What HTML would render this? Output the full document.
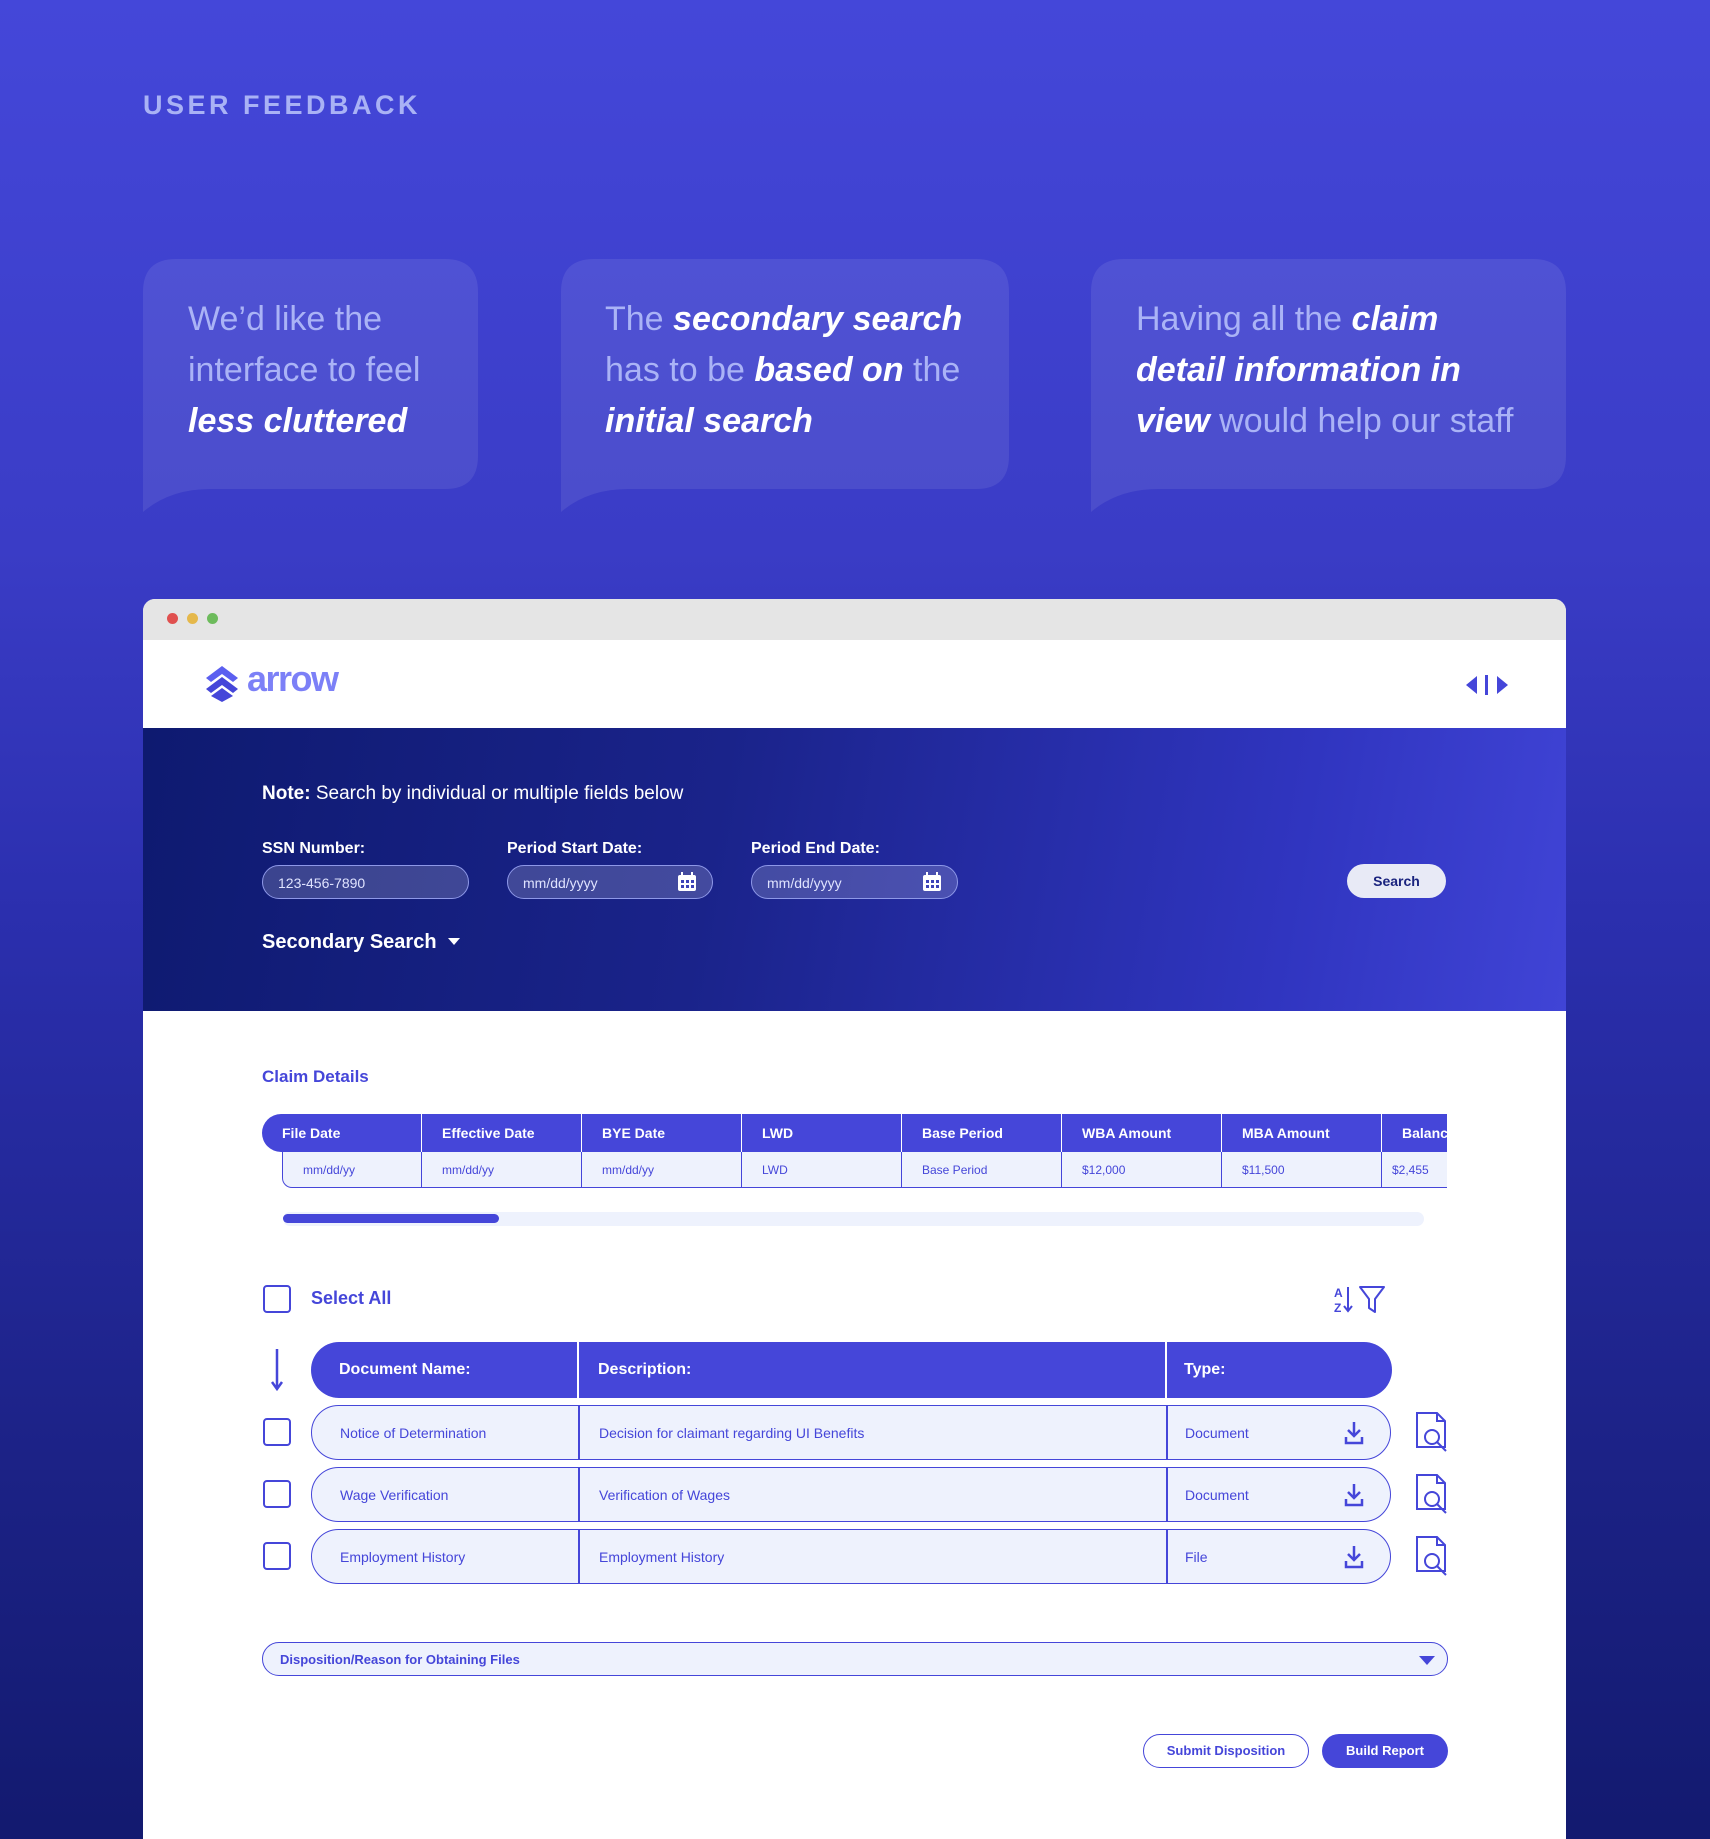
<!DOCTYPE html>
<html style="background:#131a70"><head><meta charset="utf-8"><style>
*{margin:0;padding:0;box-sizing:border-box}
body{width:1710px;height:1824px;overflow:hidden;font-family:"Liberation Sans",Arial,sans-serif;background:linear-gradient(180deg,#4447d9 0%,#3a3cc6 30%,#2b2fae 50%,#1c2286 80%,#131a70 100%);position:relative}
.abs{position:absolute}
.h1{left:143px;top:90px;font-size:27px;letter-spacing:3.5px;font-weight:bold;color:#a9b2f5}
.bt{position:absolute;font-size:34px;line-height:51px;color:#aab3f6}
.bt b{color:#fff;font-style:italic}
.win{left:143px;top:599px;width:1423px;height:1240px;background:#fff;border-radius:12px 12px 0 0;overflow:hidden}
.tb{height:41px;background:#e5e5e5}
.dot{position:absolute;top:14px;width:11px;height:11px;border-radius:50%}
.hdr{height:88px;background:#fff;position:relative}
.srch{height:283px;background:linear-gradient(100deg,#0e1a70 0%,#1a238a 40%,#3035c0 80%,#4044d6 100%);position:relative;color:#fff}
.lbl{position:absolute;font-size:16px;font-weight:bold;top:240px;color:#fff}
.inp{position:absolute;top:265px;height:34px;border:1.5px solid #8e98e8;border-radius:17px;background:rgba(255,255,255,0.18);font-size:14px;color:#dfe3ff;padding:9px 15px}
.cal{position:absolute;right:15px;top:6px}
.hc{position:absolute;height:38px;background:#4546d9;color:#fff;font-size:14px;font-weight:bold;padding:11px 20px;border-right:1.5px solid #fff}
.rc{position:absolute;height:36px;background:#eef2fd;color:#4546d9;font-size:12px;padding:11px 20px;border-right:1.5px solid #4546d9;border-bottom:1.5px solid #4546d9}
.cb{position:absolute;width:28px;height:28px;border:2px solid #4546d9;border-radius:4px}
.row{position:absolute;left:168px;width:1080px;height:55px;border:1.5px solid #4546d9;border-radius:28px;background:#eef2fd;color:#4546d9;font-size:14px}
.row span{position:absolute;top:19px}
.vl{position:absolute;top:0;bottom:0;width:1.5px;background:#4546d9}
</style></head><body>
<div class="abs h1">USER FEEDBACK</div>
<svg class="abs" style="left:0;top:0" width="1710" height="600">
<g fill="rgba(255,255,255,0.085)">
<path d="M143 292 Q143 259 176 259 L445 259 Q478 259 478 292 L478 456 Q478 489 445 489 L210 489 Q170 489 143 512 Z"/>
<path d="M561 292 Q561 259 594 259 L976 259 Q1009 259 1009 292 L1009 456 Q1009 489 976 489 L628 489 Q588 489 561 512 Z"/>
<path d="M1091 292 Q1091 259 1124 259 L1533 259 Q1566 259 1566 292 L1566 456 Q1566 489 1533 489 L1158 489 Q1118 489 1091 512 Z"/>
</g></svg>
<div class="bt" style="left:188px;top:294px">We’d like the<br>interface to feel<br><b>less cluttered</b></div>
<div class="bt" style="left:605px;top:294px">The <b>secondary search</b><br>has to be <b>based on</b> the<br><b>initial search</b></div>
<div class="bt" style="left:1136px;top:294px">Having all the <b>claim<br>detail information in<br>view</b> would help our staff</div>

<div class="abs win">
 <div class="tb"><div class="dot" style="left:24px;background:#e0504f"></div><div class="dot" style="left:44px;background:#e5b84b"></div><div class="dot" style="left:64px;background:#6dbb5c"></div></div>
 <div class="hdr">
  <svg class="abs" style="left:60px;top:24px" width="38" height="38" viewBox="0 0 38 38"><path d="M19 2 L35 14 L30 18 L19 10 L8 18 L3 14 Z" fill="#5b5ff0"/><path d="M19 13 L35 25 L30 29 L19 21 L8 29 L3 25 Z" fill="#4546d9"/><path d="M19 24 L30 32 L19 38 L8 32 Z" fill="#4546d9"/></svg>
  <div class="abs" style="left:104px;top:18px;font-size:36px;font-weight:bold;color:#7c80f7;letter-spacing:-1.5px">arrow</div>
  <svg class="abs" style="left:1322px;top:34px" width="44" height="22"><path d="M1 11 L12 2 L12 20 Z" fill="#4546d9"/><rect x="20" y="1" width="3" height="20" fill="#4546d9"/><path d="M43 11 L32 2 L32 20 Z" fill="#4546d9"/></svg>
 </div>
 <div class="srch">
  <div class="abs" style="left:119px;top:55px;font-size:19px"><b>Note:</b> Search by individual or multiple fields below</div>
  <div class="lbl" style="left:119px;top:112px">SSN Number:</div>
  <div class="lbl" style="left:364px;top:112px">Period Start Date:</div>
  <div class="lbl" style="left:608px;top:112px">Period End Date:</div>
  <div class="inp" style="left:119px;top:137px;width:207px">123-456-7890</div>
  <div class="inp" style="left:364px;top:137px;width:206px">mm/dd/yyyy<svg class="cal" width="20" height="20"><rect x="1" y="3" width="18" height="16" rx="2" fill="#fff"/><rect x="4" y="0" width="2" height="5" fill="#fff"/><rect x="14" y="0" width="2" height="5" fill="#fff"/><g fill="#3d43b8"><rect x="4" y="8" width="3" height="3"/><rect x="9" y="8" width="3" height="3"/><rect x="14" y="8" width="3" height="3"/><rect x="4" y="13" width="3" height="3"/><rect x="9" y="13" width="3" height="3"/><rect x="14" y="13" width="3" height="3"/></g></svg></div>
  <div class="inp" style="left:608px;top:137px;width:207px">mm/dd/yyyy<svg class="cal" width="20" height="20"><rect x="1" y="3" width="18" height="16" rx="2" fill="#fff"/><rect x="4" y="0" width="2" height="5" fill="#fff"/><rect x="14" y="0" width="2" height="5" fill="#fff"/><g fill="#3d43b8"><rect x="4" y="8" width="3" height="3"/><rect x="9" y="8" width="3" height="3"/><rect x="14" y="8" width="3" height="3"/><rect x="4" y="13" width="3" height="3"/><rect x="9" y="13" width="3" height="3"/><rect x="14" y="13" width="3" height="3"/></g></svg></div>
  <div class="abs" style="left:1204px;top:136px;width:99px;height:34px;border-radius:17px;background:#e8eaf6;color:#1a237e;font-size:14px;font-weight:bold;text-align:center;line-height:34px">Search</div>
  <div class="abs" style="left:119px;top:203px;font-size:20px;font-weight:bold">Secondary Search <span style="display:inline-block;margin-left:6px;border:6px solid transparent;border-top:7px solid #fff;vertical-align:-3px"></span></div>
 </div>
 <div class="abs" style="left:119px;top:468px;font-size:17px;font-weight:bold;color:#4546d9">Claim Details</div>
 <div class="hc" style="left:119px;top:515px;width:160px;border-radius:19px 0 0 19px">File Date</div>
 <div class="hc" style="left:279px;top:515px;width:160px">Effective Date</div>
 <div class="hc" style="left:439px;top:515px;width:160px">BYE Date</div>
 <div class="hc" style="left:599px;top:515px;width:160px">LWD</div>
 <div class="hc" style="left:759px;top:515px;width:160px">Base Period</div>
 <div class="hc" style="left:919px;top:515px;width:160px">WBA Amount</div>
 <div class="hc" style="left:1079px;top:515px;width:160px">MBA Amount</div>
 <div class="hc" style="left:1239px;top:515px;width:65px;border-right:0;overflow:hidden;white-space:nowrap">Balance</div>
 <div class="rc" style="left:139px;top:553px;width:140px;border-left:1.5px solid #4546d9;border-radius:0 0 0 10px">mm/dd/yy</div>
 <div class="rc" style="left:279px;top:553px;width:160px">mm/dd/yy</div>
 <div class="rc" style="left:439px;top:553px;width:160px">mm/dd/yy</div>
 <div class="rc" style="left:599px;top:553px;width:160px">LWD</div>
 <div class="rc" style="left:759px;top:553px;width:160px">Base Period</div>
 <div class="rc" style="left:919px;top:553px;width:160px">$12,000</div>
 <div class="rc" style="left:1079px;top:553px;width:160px">$11,500</div>
 <div class="rc" style="left:1239px;top:553px;width:65px;border-right:0;padding-left:10px">$2,455</div>
 <div class="abs" style="left:140px;top:613px;width:1141px;height:14px;border-radius:7px;background:#eef2fd"></div>
 <div class="abs" style="left:140px;top:615px;width:216px;height:9px;border-radius:5px;background:#4546d9"></div>

 <div class="cb" style="left:120px;top:686px"></div>
 <div class="abs" style="left:168px;top:689px;font-size:18px;font-weight:bold;color:#4546d9">Select All</div>
 <svg class="abs" style="left:1191px;top:686px" width="62" height="28"><text x="0" y="12" font-size="12" font-weight="bold" fill="#4546d9" font-family="Liberation Sans">A</text><text x="0" y="27" font-size="12" font-weight="bold" fill="#4546d9" font-family="Liberation Sans">Z</text><path d="M14 2 V26 M10 21 L14 26 L18 21" stroke="#4546d9" stroke-width="2" fill="none"/><path d="M26 2 H50 L41 14 V27 L35 23 V14 Z" stroke="#4546d9" stroke-width="2" fill="none" stroke-linejoin="round"/></svg>
 <svg class="abs" style="left:127px;top:750px" width="14" height="42"><path d="M7 0 V40 M2 33 L7 40 L12 33" stroke="#4546d9" stroke-width="2.5" fill="none"/></svg>
 <div class="abs" style="left:168px;top:743px;width:1081px;height:56px;border-radius:28px;background:#4546d9;color:#fff;font-size:16px;font-weight:bold">
  <span class="abs" style="left:28px;top:19px">Document Name:</span><span class="abs" style="left:287px;top:19px">Description:</span><span class="abs" style="left:873px;top:19px">Type:</span>
  <div class="vl" style="left:266px;background:#fff"></div><div class="vl" style="left:854px;background:#fff"></div>
 </div>
 <div class="cb" style="left:120px;top:819px"></div>
 <div class="row" style="top:806px"><span style="left:28px">Notice of Determination</span><div class="vl" style="left:266px"></div><span style="left:287px">Decision for claimant regarding UI Benefits</span><div class="vl" style="left:854px"></div><span style="left:873px">Document</span><svg class="abs" style="left:1032px;top:15px" width="20" height="24"><path d="M10 1 V15 M4 9 L10 15 L16 9" stroke="#4546d9" stroke-width="2.5" fill="none"/><path d="M2 16 V22 H18 V16" stroke="#4546d9" stroke-width="2.5" fill="none"/></svg></div>
 <div class="cb" style="left:120px;top:881px"></div>
 <div class="row" style="top:868px"><span style="left:28px">Wage Verification</span><div class="vl" style="left:266px"></div><span style="left:287px">Verification of Wages</span><div class="vl" style="left:854px"></div><span style="left:873px">Document</span><svg class="abs" style="left:1032px;top:15px" width="20" height="24"><path d="M10 1 V15 M4 9 L10 15 L16 9" stroke="#4546d9" stroke-width="2.5" fill="none"/><path d="M2 16 V22 H18 V16" stroke="#4546d9" stroke-width="2.5" fill="none"/></svg></div>
 <div class="cb" style="left:120px;top:943px"></div>
 <div class="row" style="top:930px"><span style="left:28px">Employment History</span><div class="vl" style="left:266px"></div><span style="left:287px">Employment History</span><div class="vl" style="left:854px"></div><span style="left:873px">File</span><svg class="abs" style="left:1032px;top:15px" width="20" height="24"><path d="M10 1 V15 M4 9 L10 15 L16 9" stroke="#4546d9" stroke-width="2.5" fill="none"/><path d="M2 16 V22 H18 V16" stroke="#4546d9" stroke-width="2.5" fill="none"/></svg></div>
 <svg class="abs" style="left:1272px;top:812px" width="34" height="200"><g stroke="#4546d9" stroke-width="2" fill="none">
 <path d="M2 2 H22 L30 10 V36 H2 Z M22 2 V10 H30"/><circle cx="17" cy="26" r="7"/><path d="M22 31 L31 40"/>
 <g transform="translate(0,62)"><path d="M2 2 H22 L30 10 V36 H2 Z M22 2 V10 H30"/><circle cx="17" cy="26" r="7"/><path d="M22 31 L31 40"/></g>
 <g transform="translate(0,124)"><path d="M2 2 H22 L30 10 V36 H2 Z M22 2 V10 H30"/><circle cx="17" cy="26" r="7"/><path d="M22 31 L31 40"/></g></g></svg>

 <div class="abs" style="left:119px;top:1043px;width:1186px;height:34px;border:1.5px solid #4546d9;border-radius:17px;background:#eef2fd;color:#4546d9;font-size:13px;font-weight:bold;padding:9px 17px">Disposition/Reason for Obtaining Files<span class="abs" style="right:12px;top:13px;border:8px solid transparent;border-top:9px solid #4546d9;border-bottom:0"></span></div>
 <div class="abs" style="left:1000px;top:1135px;width:166px;height:34px;border:1.5px solid #4546d9;border-radius:17px;color:#4546d9;font-size:13px;font-weight:bold;text-align:center;line-height:31px">Submit Disposition</div>
 <div class="abs" style="left:1179px;top:1135px;width:126px;height:34px;border-radius:17px;background:#4546d9;color:#fff;font-size:13px;font-weight:bold;text-align:center;line-height:34px">Build Report</div>
</div>
</body></html>
